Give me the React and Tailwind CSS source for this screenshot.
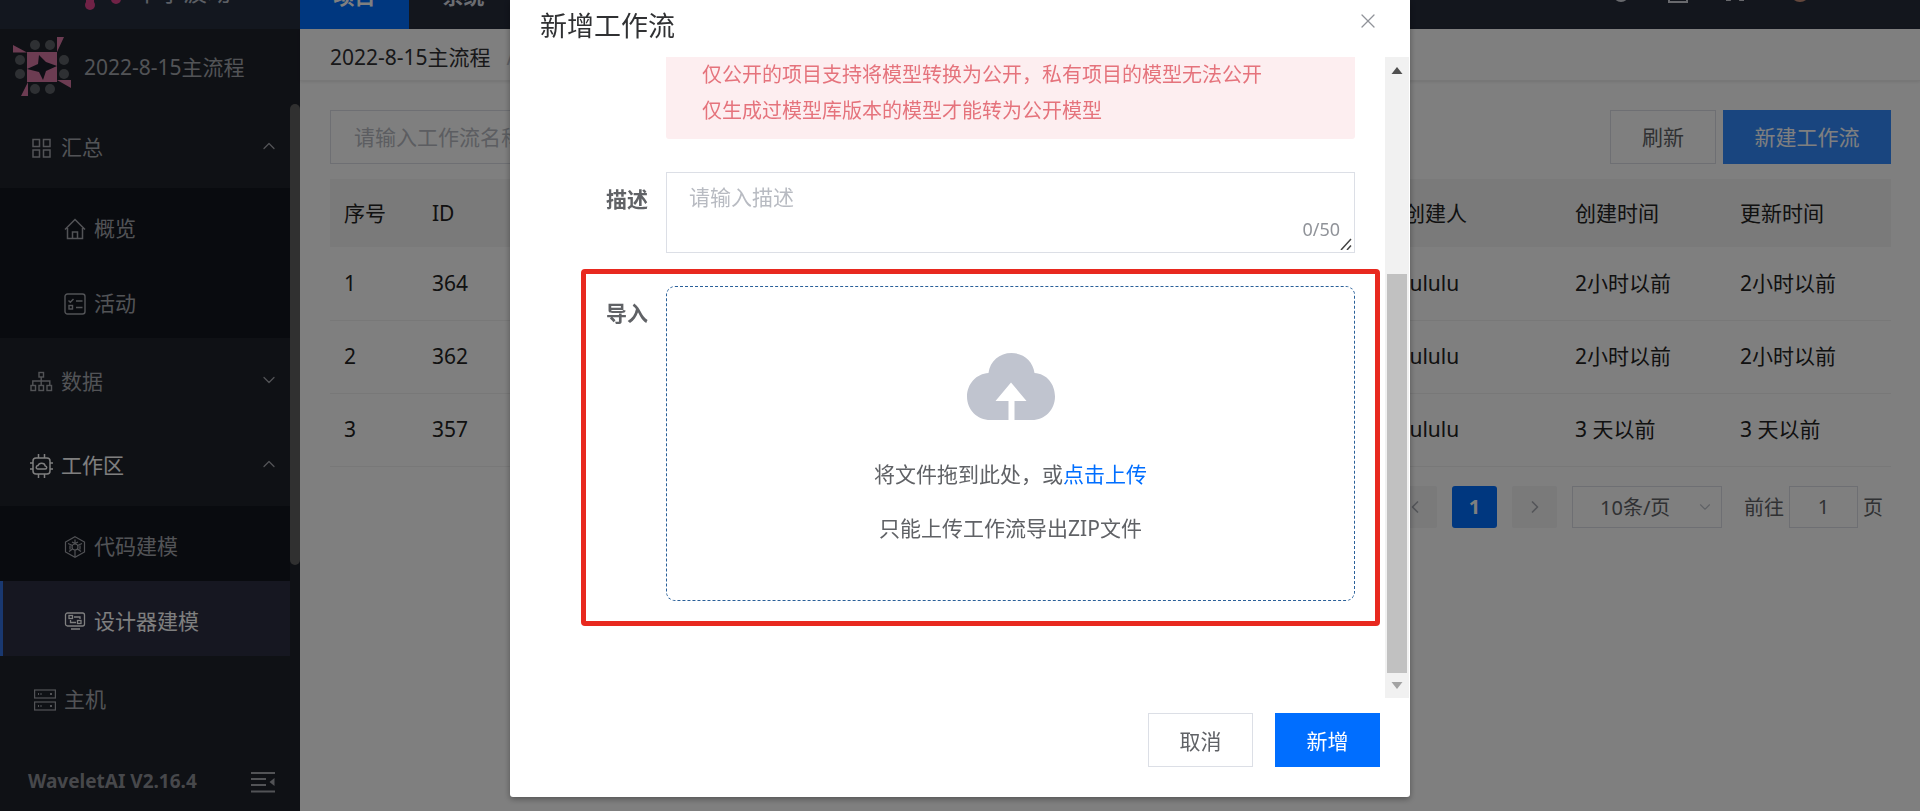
import React, { useState } from 'react';
import { ChevronDown, ChevronUp, ChevronLeft, ChevronRight, X } from 'lucide-react';

const GridIcon = () => (
  <svg width="24" height="24" viewBox="0 0 24 24" fill="none" stroke="currentColor" strokeWidth="1.5">
    <rect x="4" y="3.5" width="6.500" height="7" />
    <rect x="14.500" y="3.5" width="6.500" height="7" />
    <rect x="4" y="14" width="6.500" height="7" />
    <rect x="14.500" y="14" width="6.500" height="7" />
  </svg>
);

const TreeIcon = () => (
  <svg width="24" height="24" viewBox="0 0 24 24" fill="none" stroke="currentColor" strokeWidth="1.4">
    <rect x="10" y="2.5" width="4.5" height="4.5" />
    <path d="M12.2 7v8M3.8 15v-4h17v4" />
    <rect x="2" y="15.5" width="4.5" height="5" />
    <rect x="10" y="15.5" width="4.5" height="5" />
    <rect x="18" y="15.5" width="4.5" height="5" />
  </svg>
);

const ChipIcon = () => (
  <svg width="24" height="24" viewBox="0 0 24 24" fill="none" stroke="currentColor" strokeWidth="1.5">
    <rect x="4" y="4" width="17" height="16" rx="3" />
    <path d="M9.5 0v4M15.5 0v4M9.5 20v4M15.5 20v4M1 9h3M1 15h3M21 9h3M21 15h3" />
    <path d="M8.8 15h7.4c2 0 2-3 0-3.100-.3-2-1.800-2.700-3.700-2.700-1.900 0-3 .8-3.500 2.400-2.300.2-2.300 3.400-.2 3.400z" />
  </svg>
);

const HomeIcon = () => (
  <svg width="22" height="22" viewBox="0 0 22 22" fill="none" stroke="currentColor" strokeWidth="1.5">
    <path d="M1 11.500L11 1.500l10 10M3.500 10v10.500h15V10" />
    <path d="M8.500 20v-6h5v6" />
  </svg>
);

const ListIcon = () => (
  <svg width="22" height="22" viewBox="0 0 22 22" fill="none" stroke="currentColor" strokeWidth="1.4">
    <rect x="1" y="1" width="20" height="20" rx="2.500" />
    <path d="M4.500 7.500l1.800 1.800L9.500 6M12 8h6.500M12 14.500h6.500" />
    <rect x="5" y="12.500" width="3.500" height="3.500" />
  </svg>
);

const CubeIcon = () => (
  <svg width="22" height="22" viewBox="0 0 22 22" fill="none" stroke="currentColor" strokeWidth="1.2">
    <path d="M11 .8l9.500 5.200v10L11 21.200 1.500 16V6z" />
    <circle cx="11" cy="11" r="3" />
    <path d="M11 3.500V8M11 14v7M4 7.500l4.500 2M18 7.500l-4.500 2M5 15.500l3.500-2.500M17 15.500l-3.500-2.500M6 9.500v4M16 9.500v4M8 6l3 1.500L14 6" />
  </svg>
);

const DesignIcon = () => (
  <svg width="22" height="22" viewBox="0 0 22 22" fill="none" stroke="currentColor" strokeWidth="1.3">
    <rect x="1.500" y="2" width="19" height="13" rx="2" />
    <rect x="5" y="4.500" width="3.500" height="3" />
    <rect x="13.500" y="9.500" width="3.500" height="3" />
    <path d="M10 6h6v2M6.500 9v2.500h5.500M7 18h9" />
  </svg>
);

const HostIcon = () => (
  <svg width="22" height="22" viewBox="0 0 22 22" fill="none" stroke="currentColor" strokeWidth="1.200">
    <rect x=".6" y="1" width="20.800" height="8" />
    <rect x=".6" y="13" width="20.800" height="8" />
    <path d="M4 5h1M6.500 5h1M16 5h2M4 17h1M6.500 17h1M16 17h2" strokeWidth="1.800" />
  </svg>
);

const BrandMark = () => (
  <svg width="60" height="60" viewBox="0 0 60 60">
    <g fill="#5d6166">
      <circle cx="22" cy="8" r="5" /><circle cx="37" cy="8" r="5" />
      <circle cx="7" cy="23" r="5" /><circle cx="7" cy="37" r="5" />
      <circle cx="51" cy="23" r="5" /><circle cx="51" cy="37" r="5" />
      <circle cx="22" cy="52" r="5" /><circle cx="37" cy="52" r="5" />
    </g>
    <g fill="#d878a4">
      <rect x="14" y="15" width="30" height="30" />
      <path d="M0 8v7.500h14zM44 0h7l-7 15zM58 51v-8H44zM15 59H8l7-14z" />
    </g>
    <path d="M26 18l7 7 11 4-11 5-3 9-4-8-12-3 11-5z" fill="#1c1e2b" />
  </svg>
);

const CollapseIcon = () => (
  <svg width="24" height="22" viewBox="0 0 24 22" fill="none" stroke="currentColor" strokeWidth="2">
    <path d="M0 2h24M0 8h15M0 14h15M0 20.500h24" />
    <path d="M23.500 7v8l-5-4z" fill="currentColor" stroke="none" />
  </svg>
);

const CloudUpload = () => (
  <svg width="88" height="67" viewBox="0 0 88 67">
    <path d="M23.500 67C10 67 0 56.500 0 43.500 0 31 9.500 20.500 21.500 20 23 8 32.500 0 44.500 0S66 8 67.500 20C79.500 20.500 88 31 88 43.500 88 56.500 78 67 65 67z" fill="#c0c4cf" />
    <path d="M44 29.500L59.500 48H47.500v19h-6V48H28.500z" fill="#fff" />
  </svg>
);

const menu = [
  { name: '汇总', icon: GridIcon, open: true, children: [{ name: '概览', icon: HomeIcon }, { name: '活动', icon: ListIcon }] },
  { name: '数据', icon: TreeIcon, open: false, children: [] },
  { name: '工作区', icon: ChipIcon, open: true, current: true, children: [{ name: '代码建模', icon: CubeIcon }, { name: '设计器建模', icon: DesignIcon, active: true }] },
];

const rows = [
  { index: 1, id: 364, creator: 'lululu', created: '2小时以前', updated: '2小时以前' },
  { index: 2, id: 362, creator: 'lululu', created: '2小时以前', updated: '2小时以前' },
  { index: 3, id: 357, creator: 'lululu', created: '3 天以前', updated: '3 天以前' },
];

const Sidebar = () => (
  <aside className="w-[300px] shrink-0 bg-[#1f222b] text-[#a4a7ad] flex flex-col">
    <div className="h-[29px] bg-[#262f3f] overflow-hidden">
      <div className="h-16 -mt-10 pl-[84px] flex items-center gap-3">
        <svg width="39" height="42" viewBox="0 0 39 42" fill="#e0458c" className="shrink-0">
          <circle cx="6" cy="34" r="5" /><circle cx="32" cy="28" r="5" />
          <path d="M2 10h8v24H2z" />
        </svg>
        <span className="text-2xl text-[#b9bec8]">十字波动</span>
      </div>
    </div>
    <div className="h-[75px] pl-[13px] pt-2 flex items-start gap-[11px]">
      <BrandMark />
      <span className="text-[21px] leading-[60px]">2022-8-15主流程</span>
    </div>
    <div className="flex flex-1">
      <nav className="flex-1">
        {menu.map(group => (
          <div key={group.name}>
            <button className={`w-full h-[84px] pt-1 pl-[29px] pr-[11px] flex items-center ${group.current ? 'text-white' : ''}`}>
              <group.icon />
              <span className="ml-2 flex-1 text-left text-[21px]">{group.name}</span>
              {group.open ? <ChevronUp size={20} strokeWidth={1.5} className="mb-1 text-[#a4a7ad]" /> : <ChevronDown size={20} strokeWidth={1.5} className="mb-1" />}
            </button>
            {group.open && (
              <div className="bg-[#13161f]">
                {group.children.map(item => (
                  <a key={item.name} href="#" className={`h-[75px] pl-[61px] pt-[6px] flex items-center gap-2 border-l-3 ${item.active ? 'border-[#3370e0] bg-[#2c2e42] text-white' : 'border-transparent'}`}>
                    <item.icon />
                    <span className="text-[21px]">{item.name}</span>
                  </a>
                ))}
              </div>
            )}
          </div>
        ))}
        <a href="#" className="h-[84px] pl-[34px] pt-1 flex items-center gap-2">
          <HostIcon />
          <span className="text-[21px]">主机</span>
        </a>
      </nav>
      <div className="w-[10px]">
        <div className="h-[461px] rounded-full bg-[#606060]" />
      </div>
    </div>
    <div className="h-[71px] pl-7 pr-[25px] pt-3 flex items-center justify-between">
      <span className="text-[19px] font-bold text-[#8e9197]">WaveletAI V2.16.4</span>
      <button aria-label="收起菜单" className="text-[#a4a7ad]"><CollapseIcon /></button>
    </div>
  </aside>
);

const TopBar = () => (
  <header className="h-[29px] bg-[#262c3b] overflow-hidden">
    <div className="h-16 -mt-[35px] flex items-stretch text-[21px] font-bold text-white">
      <a href="#" className="w-[109px] bg-[#006eff] flex items-center justify-center">项目</a>
      <a href="#" className="w-[109px] flex items-center justify-center text-[#d8dbe2]">系统</a>
      <div className="ml-auto pr-[105px] flex items-center gap-[35px] text-[#d0d3da]">
        <svg width="22" height="22" viewBox="0 0 22 22" fill="none" stroke="currentColor" strokeWidth="2" className="mb-2"><circle cx="11" cy="12" r="7" /></svg>
        <svg width="22" height="22" viewBox="0 0 22 22" fill="none" stroke="currentColor" strokeWidth="2" className="mb-2"><rect x="2" y="3" width="18" height="17" /></svg>
        <svg width="22" height="22" viewBox="0 0 22 22" fill="none" stroke="currentColor" strokeWidth="2" className="mb-2"><path d="M2 18h4l2-4M20 18h-4l-2-4" /></svg>
        <svg width="30" height="30" viewBox="0 0 30 30" fill="#c98f78" className="ml-1 mb-5"><circle cx="15" cy="20" r="10" /></svg>
      </div>
    </div>
  </header>
);

const WorkflowTable = () => (
  <table className="w-full table-fixed mt-[15px] text-left text-[21px] text-[#222]">
    <thead className="bg-[#f4f4f4]">
      <tr className="h-[68px]">
        <th className="w-[88px] pl-[14px] pt-[2px] font-normal">序号</th>
        <th className="pl-[14px] pt-[2px] font-normal">ID</th>
        <th className="w-[171px] pl-[14px] pt-[2px] font-normal">创建人</th>
        <th className="w-[165px] pl-[14px] pt-[2px] font-normal">创建时间</th>
        <th className="w-[165px] pl-[14px] pt-[2px] font-normal">更新时间</th>
      </tr>
    </thead>
    <tbody>
      {rows.map(row => (
        <tr key={row.id} className="h-[73px] border-b border-[#f0f0f0]">
          <td className="pl-[14px]">{row.index}</td>
          <td className="pl-[14px]">{row.id}</td>
          <td className="pl-[14px]">{row.creator}</td>
          <td className="pl-[14px]">{row.created}</td>
          <td className="pl-[14px]">{row.updated}</td>
        </tr>
      ))}
    </tbody>
  </table>
);

const Pagination = () => (
  <div className="mt-[19px] pr-2 flex justify-end items-center text-xl text-[#606266]">
    <button aria-label="上一页" className="w-[45px] h-[42px] mr-[15px] rounded-xs bg-[#f4f4f5] text-[#a8abb2] flex items-center justify-center"><ChevronLeft size={20} /></button>
    <button className="w-[45px] h-[42px] mr-[15px] rounded-[3px] bg-[#006eff] text-white font-bold">1</button>
    <button aria-label="下一页" className="w-[45px] h-[42px] mr-[15px] rounded-xs bg-[#f4f4f5] text-[#a8abb2] flex items-center justify-center"><ChevronRight size={20} /></button>
    <div className="relative mr-[22px]">
      <select aria-label="每页条数" className="w-[150px] h-[42px] pt-[2px] pl-[27px] appearance-none border border-[#dcdfe6] bg-white">
        <option>10条/页</option>
      </select>
      <ChevronDown size={18} strokeWidth={1.5} className="absolute right-2 top-3 text-[#c0c4cc]" />
    </div>
    <label htmlFor="page" className="pt-[2px]">前往</label>
    <input id="page" defaultValue="1" className="w-[69px] h-[42px] mx-[5px] border border-[#dcdfe6] text-center" />
    <span className="pt-[2px]">页</span>
  </div>
);

const WorkflowDialog = () => {
  const [desc, setDesc] = useState('');

  return (
    <div role="dialog" aria-labelledby="dialog-title" className="w-[900px] max-w-full bg-white rounded-b-[3px] shadow-[0_2px_6px_rgba(0,0,0,0.35)] text-[21px] text-[#606266]">
      <div className="h-[57px] pl-[30px] pr-[30px] flex items-start justify-between">
        <h2 id="dialog-title" className="text-[27px] leading-[52px] text-[#303133]">新增工作流</h2>
        <button aria-label="关闭" className="mt-[9px] text-[#909399]"><X size={24} strokeWidth={1.3} /></button>
      </div>

      <div className="flex">
        <div className="flex-1 pl-[71px] pr-[5px] pb-[72px]">
          <div className="ml-[85px] mr-[25px] pl-9 pb-[10px] rounded-b-[3px] bg-[#fdeef0] text-xl leading-9 text-[#e5737c]">
            <p>仅公开的项目支持将模型转换为公开，私有项目的模型无法公开</p>
            <p>仅生成过模型库版本的模型才能转为公开模型</p>
          </div>

          <div className="mt-[33px] mr-[25px] flex">
            <label htmlFor="desc" className="w-[85px] pr-[18px] pt-3 text-right font-bold">描述</label>
            <div className="relative flex-1">
              <textarea id="desc" maxLength={50} value={desc} onChange={e => setDesc(e.target.value)} placeholder="请输入描述" className="block w-full h-[81px] px-[22px] py-[9px] border border-[#dcdfe6] resize-none outline-none placeholder:text-[#b8bbc2]" />
              <span className="absolute right-[15px] bottom-[10px] text-lg leading-7 text-[#909399]">{desc.length}/50</span>
              <svg width="12" height="12" viewBox="0 0 12 12" stroke="#444" strokeWidth="1.5" className="absolute right-[3px] bottom-[3px]"><path d="M1 12L11 1M7 12l4-4.500" /></svg>
            </div>
          </div>

          <div className="mt-[16px] p-5 pt-3 pl-0 pb-5 flex border-5 border-[#e8291f] rounded-sm">
            <label htmlFor="file" className="w-20 pr-[18px] pt-3 text-right font-bold">导入</label>
            <div className="flex-1 h-[315px] pt-[66px] flex flex-col items-center border border-dashed border-[#2a6099] rounded-[9px]">
              <CloudUpload />
              <p className="mt-[38px] leading-8">将文件拖到此处，或<label htmlFor="file" className="text-[#006eff] cursor-pointer">点击上传</label></p>
              <p className="mt-[22px] leading-8">只能上传工作流导出ZIP文件</p>
              <input id="file" type="file" accept=".zip" className="sr-only" />
            </div>
          </div>
        </div>

        <div className="w-6 px-[2px] bg-[#f1f1f1] flex flex-col items-center">
          <svg width="12" height="7" viewBox="0 0 12 7" className="mt-[10px]"><path d="M6 0l5.500 7H.5z" fill="#505050" /></svg>
          <div className="w-full flex-1 mt-[200px] mb-[9px] bg-[#c1c1c1]" />
          <svg width="12" height="7" viewBox="0 0 12 7" className="mb-[9px]"><path d="M6 7l5.500-7H.5z" fill="#a3a3a3" /></svg>
        </div>
        <div className="w-px" />
      </div>

      <div className="pt-[15px] pb-[30px] pr-[30px] flex justify-end gap-[22px]">
        <button className="w-[105px] h-[54px] pt-1 border border-[#dcdfe6] bg-white">取消</button>
        <button className="w-[105px] h-[54px] pt-1 bg-[#006eff] text-white">新增</button>
      </div>
    </div>
  );
};

const App = () => (
  <div className="min-h-screen flex overflow-hidden bg-white font-['Noto_Sans','Noto_Sans_CJK_SC',sans-serif]">
    <Sidebar />
    <div className="flex-1 min-w-0">
      <TopBar />
      <div className="h-[52px] pl-[30px] pt-[6px] flex items-center gap-4 border-b border-[#eee] shadow-[0_1px_3px_rgba(0,0,0,0.1)] text-[21px] text-[#303133]">
        <a href="#">2022-8-15主流程</a>
        <span className="text-[#c0c4cc]">/</span>
      </div>
      <main className="pt-[29px] pl-[30px] pr-[29px]">
        <div className="flex">
          <input type="text" aria-label="工作流名称" placeholder="请输入工作流名称" className="w-[300px] h-[54px] px-[23px] border border-[#dcdfe6] text-[21px] placeholder:text-[#b8bbc2]" />
          <button className="ml-auto w-[106px] h-[54px] pt-[2px] border border-[#dcdfe6] text-[21px] text-[#606266]">刷新</button>
          <button className="ml-[7px] w-[168px] h-[54px] pt-[2px] bg-[#338bff] text-[21px] text-white">新建工作流</button>
        </div>
        <WorkflowTable />
        <Pagination />
      </main>
    </div>

    <div className="fixed inset-0 bg-black/50 flex items-start justify-center">
      <WorkflowDialog />
    </div>
  </div>
);

export default App;
